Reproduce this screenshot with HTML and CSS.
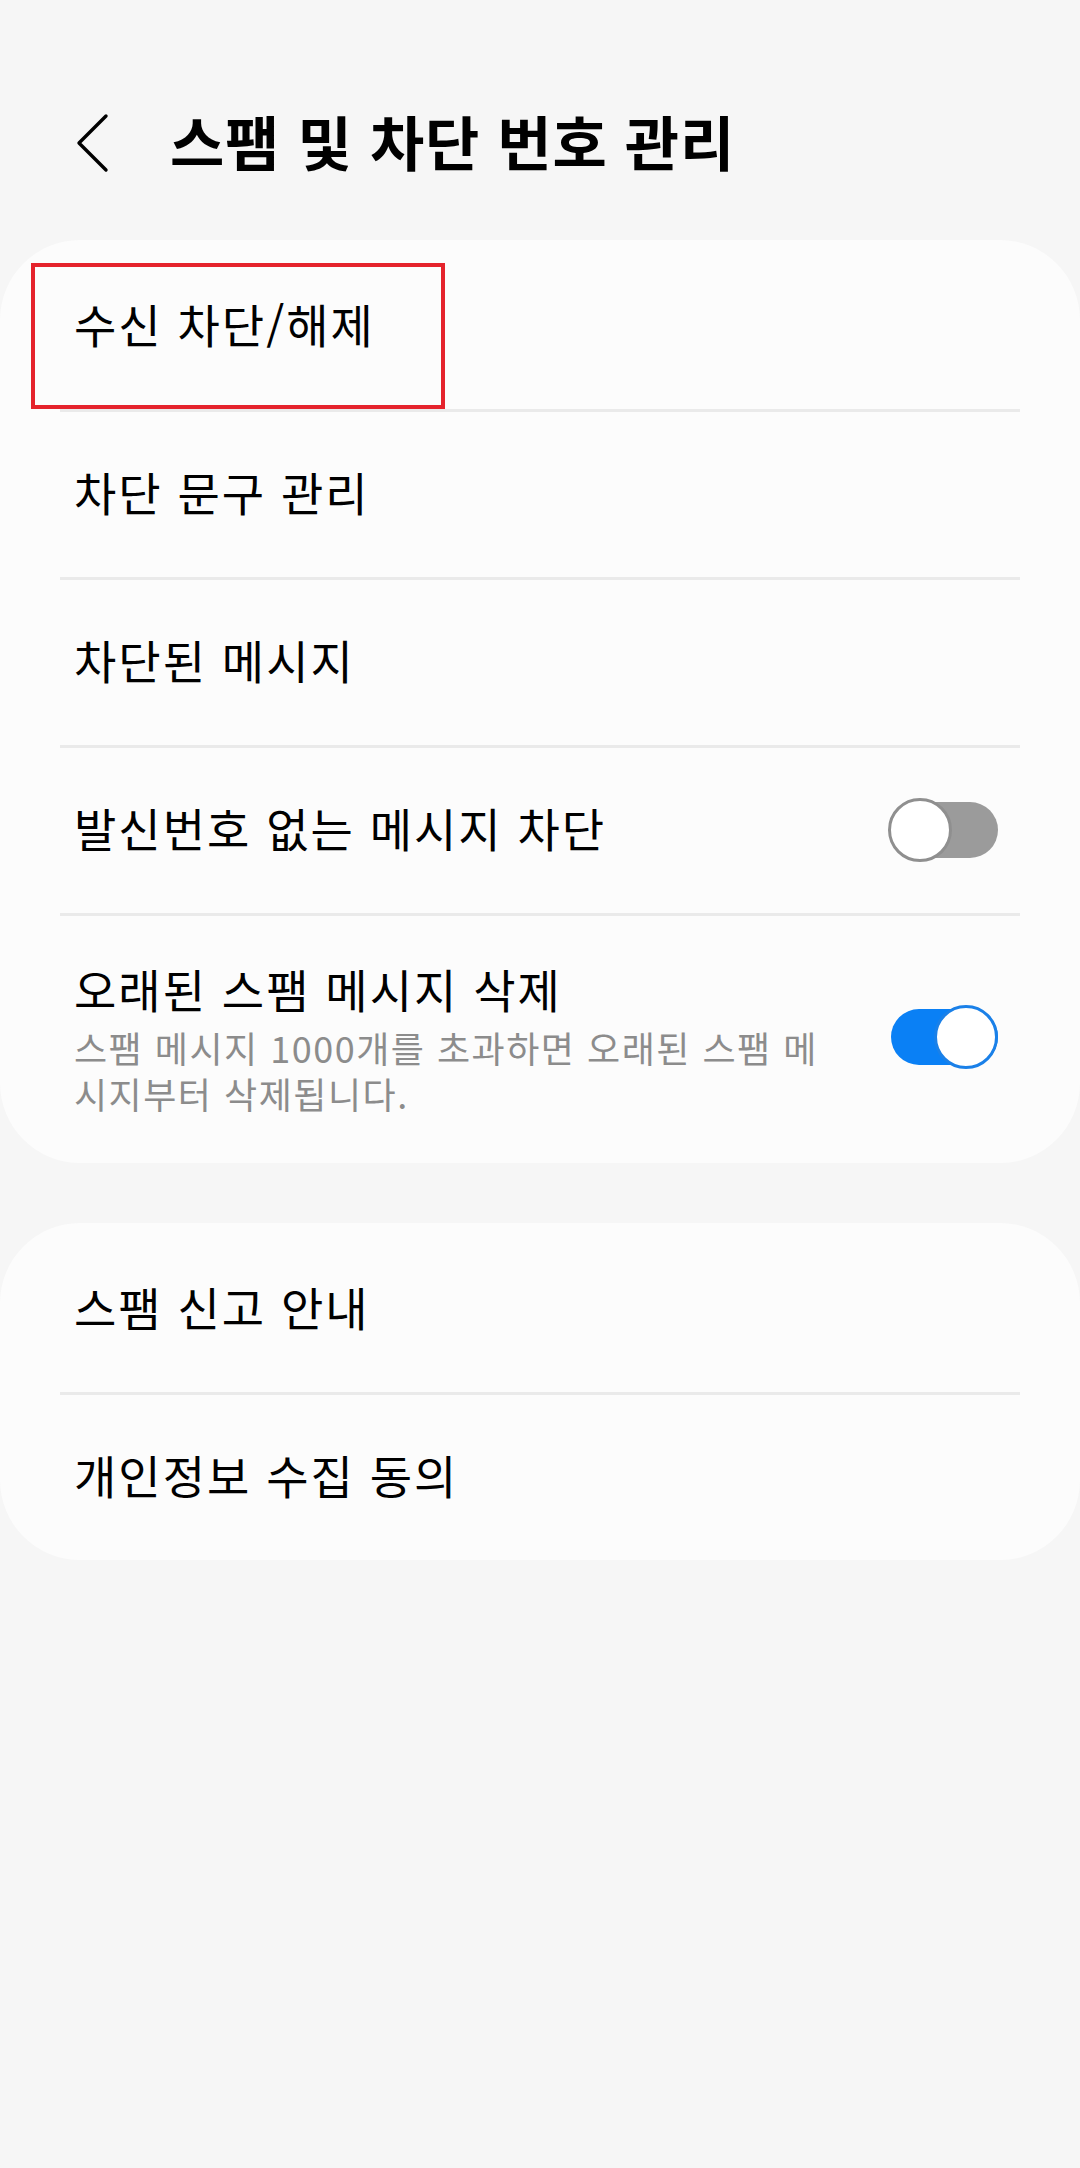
FILE: index.html
```html
<!DOCTYPE html>
<html lang="ko">
<head>
  <meta charset="UTF-8">
  <meta name="viewport" content="width=device-width, initial-scale=1.0">
  <title>스팸 및 차단 번호 관리</title>
  <link rel="stylesheet" href="styles.css">
</head>
<body>

<header class="top-bar">
  <svg class="back-icon" width="34" height="60" viewBox="0 0 34 60">
    <path d="M30 3 L3 30 L30 57" fill="none" stroke="#000" stroke-width="3.4" stroke-linecap="round" stroke-linejoin="round"/>
  </svg>
  <h1 class="page-title">스팸 및 차단 번호 관리</h1>
</header>

<section class="card">
  <div class="highlight"></div>
  <div class="row">
    <span class="row-title">수신 차단/해제</span>
  </div>
  <div class="row">
    <span class="row-title">차단 문구 관리</span>
  </div>
  <div class="row">
    <span class="row-title">차단된 메시지</span>
  </div>
  <div class="row">
    <span class="row-title">발신번호 없는 메시지 차단</span>
    <span class="switch"><span class="track"></span><span class="thumb"></span></span>
  </div>
  <div class="row row-tall">
    <div class="row-text">
      <div class="row-title">오래된 스팸 메시지 삭제</div>
      <div class="row-sub">스팸 메시지 1000개를 초과하면 오래된 스팸 메시지부터 삭제됩니다.</div>
    </div>
    <span class="switch on"><span class="track"></span><span class="thumb"></span></span>
  </div>
</section>

<section class="card">
  <div class="row">
    <span class="row-title">스팸 신고 안내</span>
  </div>
  <div class="row">
    <span class="row-title">개인정보 수집 동의</span>
  </div>
</section>

</body>
</html>
```

FILE: styles.css
```css
body {
    margin: 0;
    padding: 0;
    background-color: #f6f6f6;
    font-family: "Noto Sans CJK KR", "Noto Sans", sans-serif;
    color: #000;
}
.top-bar {
    display: flex;
    align-items: center;
    height: 70px;
    padding: 106px 0 0 76px;
}
.back-icon {
    flex: none;
    margin-top: 4px;
}
.page-title {
    margin: 0 0 0 60px;
    font-size: 59px;
    font-weight: bold;
    line-height: 70px;
    letter-spacing: 0.8px;
}
.card {
    position: relative;
    margin-top: 64px;
    padding-top: 4px;
    background: #fcfcfc;
    border-radius: 80px;
}
.card + .card {
    margin-top: 60px;
}
.row {
    position: relative;
    display: flex;
    align-items: center;
    justify-content: space-between;
    height: 165px;
    padding: 0 82px 0 74px;
    border-bottom: 3px solid transparent;
}
.row::after {
    content: "";
    position: absolute;
    left: 60px;
    right: 60px;
    bottom: -3px;
    height: 3px;
    background: #eaeaea;
}
.row:last-child::after {
    display: none;
}
.row:last-child {
    border-bottom: none;
}
.row-title {
    padding-bottom: 8px;
    font-size: 46px;
    line-height: 60px;
    letter-spacing: 2px;
}
.row-tall {
    height: auto;
    padding-top: 42px;
    padding-bottom: 47px;
}
.row-text .row-title {
    padding-bottom: 0;
}
.row-text {
    max-width: 770px;
}
.row-sub {
    margin-top: 6px;
    font-size: 36px;
    line-height: 46px;
    letter-spacing: 1.5px;
    color: #8c8c8c;
}
.switch {
    position: relative;
    flex: none;
    width: 110px;
    height: 65px;
}
.track {
    position: absolute;
    right: 0;
    top: 4px;
    width: 107px;
    height: 56px;
    border-radius: 28px;
    background: #9b9b9b;
}
.thumb {
    position: absolute;
    left: 0;
    top: 0;
    box-sizing: border-box;
    width: 64px;
    height: 64px;
    border-radius: 50%;
    background: #fff;
    border: 3px solid #8f8f8f;
}
.switch.on .track {
    background: #0a80f5;
}
.switch.on .thumb {
    left: auto;
    right: 0;
    border-color: #1a80e8;
}
.highlight {
    position: absolute;
    top: 23px;
    left: 31px;
    width: 414px;
    height: 146px;
    box-sizing: border-box;
    border: 4px solid #e5232c;
    z-index: 1;
}
```
